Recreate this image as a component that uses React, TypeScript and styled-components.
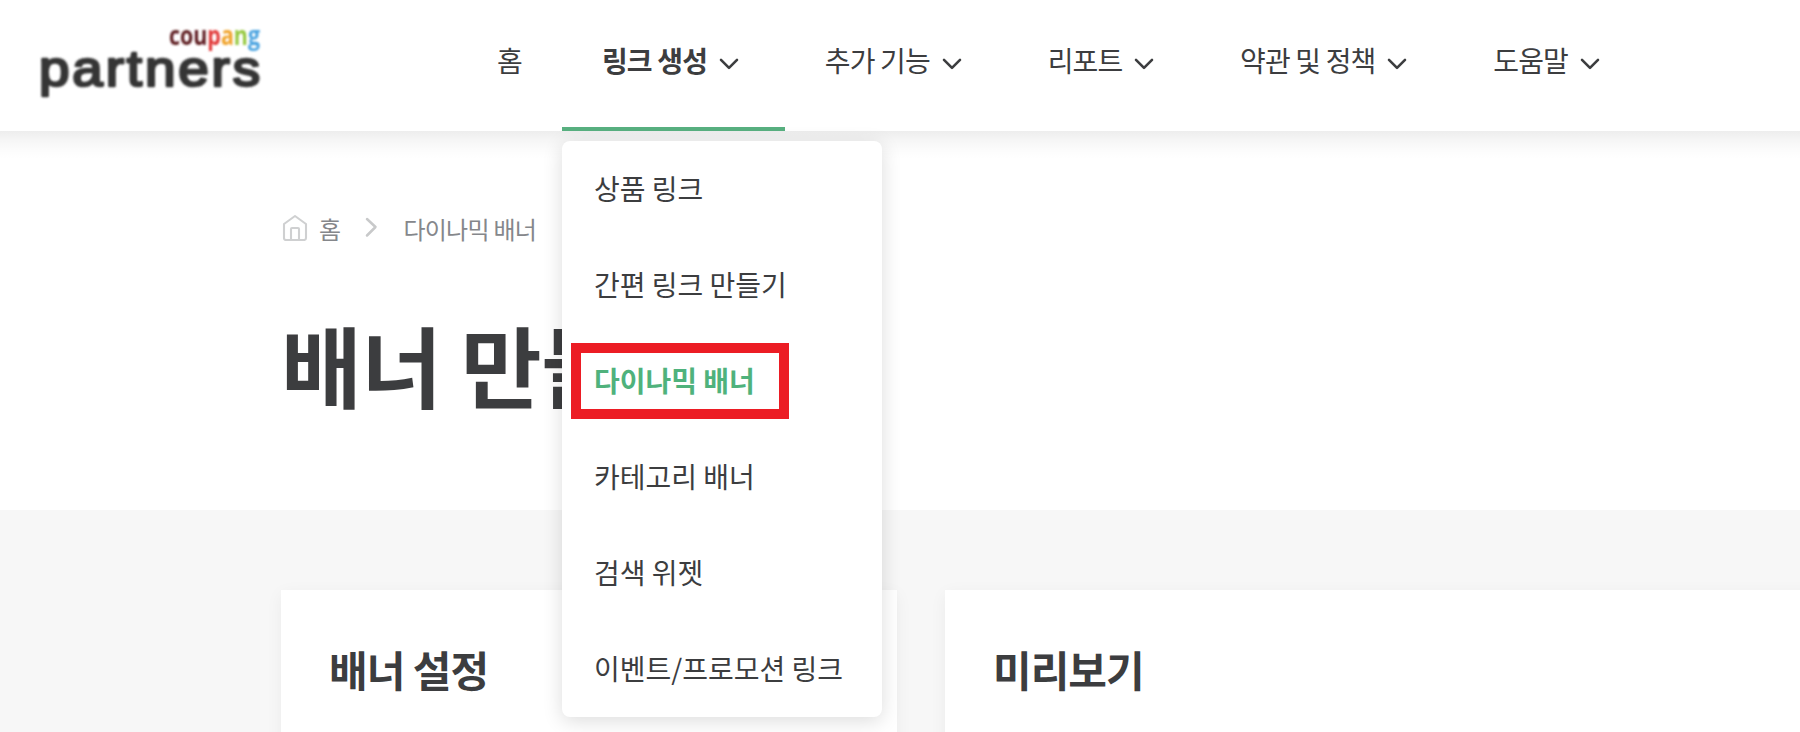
import React from 'react';
import styled, { createGlobalStyle, css } from 'styled-components';

const GlobalStyle = createGlobalStyle`
    * {
        box-sizing: border-box;
    }

    body {
        margin: 0;
        overflow: hidden;
        background: #fff;
        color: #3c3d3f;
        font-family: 'Noto Sans CJK KR', 'Noto Sans', sans-serif;
    }

    h1, h2, ul {
        margin: 0;
        padding: 0;
    }
`;

const Page = styled.div`
    height: 732px;
    display: flex;
    flex-direction: column;
    overflow: hidden;
`;

const Header = styled.header`
    flex: none;
    position: relative;
    z-index: 2;
    display: flex;
    height: 131px;
    background: #fff;

    &::after {
        content: '';
        position: absolute;
        z-index: -1;
        top: 100%;
        left: 0;
        right: 0;
        height: 28px;
        background: linear-gradient(
            rgba(0, 0, 0, 0.07),
            rgba(0, 0, 0, 0.035) 35%,
            rgba(0, 0, 0, 0.012) 70%,
            transparent
        );
    }
`;

const LogoLink = styled.div`
    width: 457px;
    padding: 20px 0 0 41px;

    svg {
        display: block;
        overflow: visible;
    }
`;

const Nav = styled.nav`
    display: flex;
`;

const NavItem = styled.div<{ $active?: boolean }>`
    position: relative;
    display: flex;
    padding: 0 40px;
    line-height: 120px;
    font-size: 28px;
    letter-spacing: -0.03em;
    white-space: nowrap;
    font-weight: ${({ $active }) => ($active ? 700 : 400)};
    border-bottom: 4px solid ${({ $active }) => ($active ? '#58b080' : 'transparent')};
`;

const NavArrow = styled.svg`
    width: 20px;
    height: 14px;
    margin: 57px 5.9px 0 11.8px;
`;

const Menu = styled.ul`
    position: absolute;
    top: 141px;
    left: 0;
    width: 320px;
    list-style: none;
    background: #fff;
    border-radius: 8px;
    box-shadow: 0 4px 20px rgba(0, 0, 0, 0.14);
`;

const MenuItem = styled.li<{ $selected?: boolean }>`
    position: relative;
    height: 96px;
    padding-left: 32px;
    line-height: 95px;
    font-size: 28px;
    font-weight: 400;
    letter-spacing: 0;

    ${({ $selected }) => $selected && css`
        color: #4fb27c;
        font-weight: 700;
    `}
`;

const Highlight = styled.span`
    position: absolute;
    top: 10px;
    left: 9px;
    width: 218px;
    height: 76px;
    border: 10px solid #ec1c24;
`;

const Hero = styled.section`
    flex: none;
    height: 379px;
    padding: 79px 0 0 281px;
`;

const Breadcrumb = styled.div`
    display: flex;
    align-items: center;
    height: 36px;
    font-size: 24px;
    letter-spacing: -0.03em;
    color: #85878b;
`;

const HomeIcon = styled.svg`
    width: 28px;
    height: 28px;
    margin: -2px 10px 0 0;
`;

const CrumbArrow = styled.svg`
    width: 14px;
    height: 22px;
    margin: -3px 25px 0 24px;
`;

const PageTitle = styled.h1`
    margin-top: 50px;
    font-size: 88px;
    line-height: 134px;
    font-weight: 700;
    letter-spacing: -0.7px;
`;

const Content = styled.main`
    flex: 1;
    display: flex;
    gap: 48px;
    padding: 80px 0 0 281px;
    background: #f7f7f7;
`;

const Card = styled.section<{ $width: number }>`
    flex: none;
    width: ${({ $width }) => $width}px;
    height: 400px;
    padding: 47px 48px;
    background: #fff;
    box-shadow: 0 4px 16px rgba(0, 0, 0, 0.05);
`;

const CardTitle = styled.h2`
    font-size: 42px;
    line-height: 64px;
    font-weight: 700;
    letter-spacing: -1px;
`;

const navItems = ['홈', '링크 생성', '추가 기능', '리포트', '약관 및 정책', '도움말'];

const menuItems = [
    '상품 링크',
    '간편 링크 만들기',
    '다이나믹 배너',
    '카테고리 배너',
    '검색 위젯',
    '이벤트/프로모션 링크'
];

const Logo: React.FC = () => (
    <LogoLink>
        <svg width="222" height="77" viewBox="0 0 222 77" fontFamily="'Liberation Sans', sans-serif">
            <g filter="url(#soften)">
                <text
                    x="128"
                    y="24.5"
                    fontSize="26"
                    fontWeight="700"
                    fontFamily="'Open Sans', sans-serif"
                    textLength="91"
                    lengthAdjust="spacingAndGlyphs"
                >
                    <tspan fill="#5e1f23">cou</tspan>
                    <tspan fill="#e23b3b">p</tspan>
                    <tspan fill="#f0a32c">a</tspan>
                    <tspan fill="#94c83d">n</tspan>
                    <tspan fill="#4aa3e0">g</tspan>
                </text>
                <text
                    x="-2"
                    y="66"
                    fontSize="50"
                    fill="#363636"
                    stroke="#363636"
                    strokeWidth="2.6"
                    strokeLinejoin="round"
                    letterSpacing="2.6"
                    textLength="224"
                    lengthAdjust="spacingAndGlyphs"
                >
                    partners
                </text>
            </g>
            <defs>
                <filter id="soften">
                    <feGaussianBlur stdDeviation="0.8" />
                </filter>
            </defs>
        </svg>
    </LogoLink>
);

const App: React.FC = () => {
    const active = '링크 생성';
    const selected = '다이나믹 배너';

    return (
        <Page>
            <GlobalStyle />
            <Header>
                <Logo />
                <Nav>
                    {navItems.map((item, index) => (
                        <NavItem key={item} $active={item === active}>
                            {item}
                            {index > 0 && (
                                <NavArrow viewBox="0 0 20 14" fill="none" stroke="#3c3d3f" strokeWidth="2.6">
                                    <path d="M2 2.8l8 8 8-8" strokeLinecap="round" strokeLinejoin="round" />
                                </NavArrow>
                            )}
                            {item === active && (
                                <Menu>
                                    {menuItems.map((entry) => (
                                        <MenuItem key={entry} $selected={entry === selected}>
                                            {entry}
                                            {entry === selected && <Highlight />}
                                        </MenuItem>
                                    ))}
                                </Menu>
                            )}
                        </NavItem>
                    ))}
                </Nav>
            </Header>
            <Hero>
                <Breadcrumb>
                    <HomeIcon viewBox="0 0 28 28" fill="none" stroke="#cfd0d1" strokeWidth="2.1">
                        <path d="M3 11L14 3l11 8V25q0 2-2 2H5q-2 0-2-2z" strokeLinejoin="round" />
                        <path d="M10 27V16q0-1 1-1h6q1 0 1 1v11" />
                    </HomeIcon>
                    홈
                    <CrumbArrow viewBox="0 0 14 22" fill="none" stroke="#c8c9ca" strokeWidth="2.5">
                        <path d="M3 3l8.5 8L3 19.5" strokeLinecap="round" strokeLinejoin="round" />
                    </CrumbArrow>
                    다이나믹 배너
                </Breadcrumb>
                <PageTitle>배너 만들기</PageTitle>
            </Hero>
            <Content>
                <Card $width={616}>
                    <CardTitle>배너 설정</CardTitle>
                </Card>
                <Card $width={900}>
                    <CardTitle>미리보기</CardTitle>
                </Card>
            </Content>
        </Page>
    );
};

export default App;
